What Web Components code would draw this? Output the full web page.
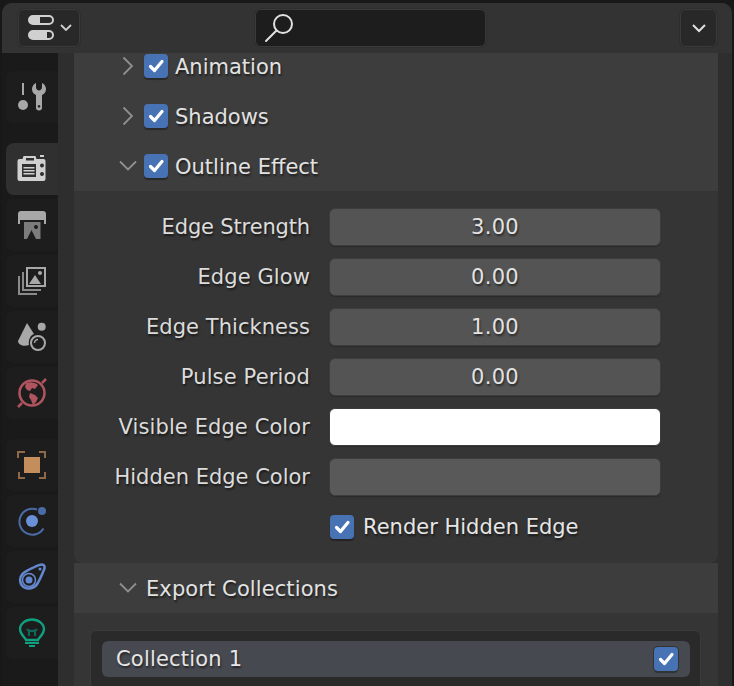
<!DOCTYPE html>
<html>
<head>
<meta charset="utf-8">
<style>
  html, body { margin: 0; height: 686px; overflow: hidden; background: #181818; }
  body { font-family: "DejaVu Sans", sans-serif; }
</style>
</head>
<body>
<prop-editor>
  <top-bar slot="top"></top-bar>
  <side-tabs slot="side">
    <side-tab class="last"><svg viewBox="0 0 28 28"><path fill="#a8a8a8" d="M4 0h2v12h-2z"/><circle cx="5" cy="22" r="5" fill="#a8a8a8"/><path fill="#a8a8a8" fill-rule="evenodd" d="M18 0v4c0 2 1.500 3.500 3 3.500s3-1.500 3-3.500v-4c2.500 1 4 3.500 4 6 0 3-1.500 5-4 6v13c0 1.500-1.300 2.500-3 2.500s-3-1-3-2.500v-13c-2.500-1-4-3-4-6 0-2.500 1.500-5 4-6zM21 22a1.300 1.300 0 1 0 .01 0z"/></svg></side-tab>
    <side-tab active><svg viewBox="0 0 28 28"><path fill="#d0d0d0" fill-rule="evenodd" d="M2 4h2.500l1-3h12l1 3h7a2 2 0 0 1 2 2v18a2 2 0 0 1-2 2h-24a2 2 0 0 1-2-2v-18a2 2 0 0 1 2-2zM8 3v2.500h8v-2.500zM4 9v13h14v-13zM24 8.500a2 2 0 1 0 .01 0zM24 17a2 2 0 1 0 .01 0z"/><path fill="#d0d0d0" d="M22 0h4v2h-4zM5.500 12h11v1.500h-11zM5.500 15h11v1.500h-11zM5.500 18h11v1.500h-11z"/></svg></side-tab>
    <side-tab><svg viewBox="0 0 28 28"><path fill="#a8a8a8" d="M3 0h22a3 3 0 0 1 3 3v10h-2v-4h-24v4h-2v-10a3 3 0 0 1 3-3z"/><path fill="#7c7c7c" d="M6 11h16.500v17h-16.500z"/><path fill="#1d1d1d" d="M9 28l4.500-9 4.500 9zM18 14a2 2 0 1 0 .01 0z"/></svg></side-tab>
    <side-tab><svg viewBox="0 0 28 28"><path fill="none" stroke="#a8a8a8" stroke-width="2" d="M9 1h18v18h-18z"/><path fill="#a8a8a8" d="M11 17l6-9 6 9zM22 4a2 2 0 1 0 .01 0z"/><path fill="none" stroke="#8a8a8a" stroke-width="2" d="M5 5v18h18M1 9v18h18"/></svg></side-tab>
    <side-tab><svg viewBox="0 0 28 28"><path fill="#a8a8a8" d="M9 0L0 18C0 22 6 24 11 22 10 16 13 12 16 11Z"/><circle cx="23.700" cy="3.700" r="4" fill="#a8a8a8"/><circle cx="20" cy="20" r="7" fill="none" stroke="#a8a8a8" stroke-width="2"/><path fill="none" stroke="#a8a8a8" stroke-width="1.500" d="M16.500 20a3.500 3.500 0 0 1 3.500-3.500"/></svg></side-tab>
    <side-tab class="last"><svg viewBox="0 0 28 28"><circle cx="14" cy="14" r="12.500" fill="none" stroke="#b0555f" stroke-width="2.500"/><path stroke="#b0555f" stroke-width="2.500" d="M28 0L24 4M0 28L4 24"/><path fill="#b0555f" d="M8 4c4-1.500 9-1 12 2l-3 4-3-1-2 3-3-1-2-3zM12 14l5 2 3 3-2 4-3 3-2-5-2-3z"/></svg></side-tab>
    <side-tab><svg viewBox="0 0 28 28"><path fill="none" stroke="#8f6a4a" stroke-width="2" d="M0 7v-6h7M21 1h6v6M27 21v6h-6M7 27h-6v-6"/><path fill="#c48d5c" d="M6 6h16v16h-16z"/></svg></side-tab>
    <side-tab><svg viewBox="0 0 28 28"><path fill="none" stroke="#4a6ba5" stroke-width="2" d="M19 2.500a13 13 0 1 0 6.500 19"/><circle cx="14" cy="14" r="6" fill="#6a90d8"/><circle cx="24" cy="4" r="4" fill="#4a6ba5"/></svg></side-tab>
    <side-tab><svg viewBox="0 0 28 28"><path fill="none" stroke="#6488cf" stroke-width="2.500" d="M24 1.500c2 0 3 2 2.500 4-2 5-4 10-7 15-3 5-10 6.500-14 3.500-4-3-4.500-9-1-13 3-3 8-5 12-7 3-1.500 5-2.500 7.500-2.500z"/><circle cx="11" cy="17" r="3.500" fill="#6488cf"/><circle cx="11" cy="17" r="6.500" fill="none" stroke="#6488cf" stroke-width="1.500"/><circle cx="22" cy="6" r="1.500" fill="#6488cf"/></svg></side-tab>
    <side-tab><svg viewBox="0 0 28 28"><path fill="none" stroke="#10a080" stroke-width="2.300" d="M8 21c-1-3-6-5-6-11a12 9.500 0 0 1 24 0c0 6-5 8-6 11z"/><path fill="none" stroke="#0e6a58" stroke-width="2" d="M9 10c1 2 3 2 5 2s4 0 5-2M11 12v5M17 12v5"/><path fill="#10a080" d="M7 23h14v2h-14zM11 26h6v2h-6z"/></svg></side-tab>
  </side-tabs>
  <panel-head slot="main" open="false" check="true">Animation</panel-head>
  <panel-head slot="main" open="false" check="true">Shadows</panel-head>
  <panel-head slot="main" open="true" check="true">Outline Effect</panel-head>
  <panel-body slot="main">
    <prop-row label="Edge Strength" style="letter-spacing:-.15px"><num-field>3.00</num-field></prop-row>
    <prop-row label="Edge Glow" style="letter-spacing:.1px"><num-field>0.00</num-field></prop-row>
    <prop-row label="Edge Thickness" style="letter-spacing:.05px"><num-field>1.00</num-field></prop-row>
    <prop-row label="Pulse Period" style="letter-spacing:.15px"><num-field>0.00</num-field></prop-row>
    <prop-row label="Visible Edge Color" style="letter-spacing:.1px"><color-field color="#ffffff"></color-field></prop-row>
    <prop-row label="Hidden Edge Color"><color-field color="#595959"></color-field></prop-row>
    <prop-row><check-label>Render Hidden Edge</check-label></prop-row>
  </panel-body>
  <panel-head slot="main" open="true" style="letter-spacing:.1px">Export Collections</panel-head>
  <list-box slot="main"><list-item>Collection 1</list-item></list-box>
</prop-editor>

<script>
const CHECK_SVG = `<svg viewBox="0 0 24 24" width="24" height="24"><path fill="none" stroke="#fff" stroke-width="3.200" stroke-linecap="round" stroke-linejoin="round" d="M6.500 12.500l4 4 7.500-9"/></svg>`;
const CHEVRON_OPEN = `<svg viewBox="0 0 20 12" width="20" height="12"><path fill="none" stroke="#8f8f8f" stroke-width="1.800" d="M2 1.500l8 8 8-8"/></svg>`;
const CHEVRON_CLOSED = `<svg viewBox="0 0 12 20" width="12" height="20"><path fill="none" stroke="#8f8f8f" stroke-width="1.800" d="M1.500 1.500l8.500 8.500-8.500 8.500"/></svg>`;

class Base extends HTMLElement {
  constructor() {
    super();
    this.attachShadow({ mode: "open" });
  }
  connectedCallback() {
    this.shadowRoot.innerHTML = this.render();
  }
}

class PropEditor extends Base {
  render() {
    return /* html */`
    <style>
      :host { display: block; padding: 3px 2px 0; height: 683px; }
      .win { height: 100%; display: grid; grid-template-columns: 56px 1fr; grid-template-rows: 50px 1fr;
        background: #2e2e2e; border-radius: 10px 10px 0 0; overflow: hidden; }
      .top { grid-column: 1 / 3; }
      .side { background: #1a1a1a; overflow: hidden; }
      .scroll { display: flex; padding: 0 14px 0 16px; overflow: hidden; }
      /* the panel column is scrolled down a little, the first header is cut off */
      .main { flex: 1; display: block; min-width: 0; margin-top: -12px; }
    </style>
    <div class="win">
      <div class="top"><slot name="top"></slot></div>
      <div class="side"><slot name="side"></slot></div>
      <div class="scroll"><div class="main"><slot name="main"></slot></div></div>
    </div>`;
  }
}

class TopBar extends Base {
  render() {
    return /* html */`
    <style>
      :host { display: flex; height: 50px; background: #333; align-items: center; box-sizing: border-box; padding: 0 15px 0 16px; }
      .btn { box-sizing: border-box; height: 38px; background: #282828; border: 1px solid #3a3a3a; border-radius: 6px;
        display: flex; align-items: center; justify-content: center; box-shadow: 0 0 0 1px #2e2e2e; }
      .toggle { width: 62px; gap: 5px; margin-right: 175px; }
      .search { width: 231px; background: #1d1d1d; justify-content: flex-start; padding-left: 8px; margin-right: 194px; }
      .more { width: 37px; }
      svg { display: block; }
    </style>
    <div class="btn toggle">
      <svg width="28" height="28" viewBox="0 0 28 28"><path fill="#d0d0d0" fill-rule="evenodd" d="M6 1h16a5 5 0 0 1 0 10h-16a5 5 0 0 1 0-10zM13 3v6h9a3 3 0 0 0 0-6z"/><path fill="#d0d0d0" fill-rule="evenodd" d="M6 16h16a5 5 0 0 1 0 10h-16a5 5 0 0 1 0-10zM20 18v6h2a3 3 0 0 0 0-6z"/></svg>
      <svg width="12" height="8" viewBox="0 0 12 8"><path fill="none" stroke="#d0d0d0" stroke-width="1.800" d="M1 1l5 5 5-5"/></svg>
    </div>
    <div class="btn search">
      <svg width="30" height="30" viewBox="0 0 30 30"><circle cx="19" cy="11" r="9" fill="none" stroke="#e0e0e0" stroke-width="2"/><path stroke="#e0e0e0" stroke-width="2" stroke-linecap="round" d="M12.500 17.500L2 28"/></svg>
    </div>
    <div class="btn more">
      <svg width="14" height="9" viewBox="0 0 14 9"><path fill="none" stroke="#e0e0e0" stroke-width="2" d="M1 1l6 6 6-6"/></svg>
    </div>`;
  }
}

class SideTabs extends Base {
  render() {
    return /* html */`
    <style>
      :host { display: flex; flex-direction: column; gap: 4px; padding-top: 18px; }
    </style>
    <slot></slot>`;
  }
}

class SideTab extends Base {
  render() {
    return /* html */`
    <style>
      :host { display: flex; flex: none; box-sizing: border-box; height: 52px; margin-left: 4px; padding-left: 12px; align-items: center;
        background: #1d1d1d; border-radius: 8px 0 0 8px; }
      :host(.last) { margin-bottom: 16px; }
      :host([active]) { background: #303030; }
      ::slotted(svg) { width: 28px; height: 28px; display: block; overflow: visible; }
    </style>
    <slot></slot>`;
  }
}

class PanelHead extends Base {
  render() {
    const open = this.getAttribute("open") === "true";
    const hasCheck = this.hasAttribute("check");
    const chevron = `<span class="chev">${open ? CHEVRON_OPEN : CHEVRON_CLOSED}</span>`;
    return /* html */`
    <style>
      :host { display: flex; align-items: center; height: 50px; background: #3d3d3d; box-sizing: border-box;
        padding-left: 42px; font: 21px "DejaVu Sans", sans-serif; color: #e2e2e2; text-shadow: 1px 2px 2px #0008; }
      .chev { width: 24px; height: 26px; display: flex; justify-content: center; align-items: center; margin-right: 4px; }
      .text { padding-top: 1px; }
      svg { display: block; }
      check-mark { margin: 0 7px 0 0; }
    </style>
    ${chevron}${hasCheck ? `<check-mark></check-mark>` : `<span style="width:2px"></span>`}
    <span class="text"><slot></slot></span>`;
  }
}

class CheckMark extends Base {
  render() {
    return /* html */`
    <style>
      :host { display: block; flex: none; width: 24px; height: 24px; background: #4772b3; border-radius: 4px; box-shadow: 0 2px 1px #0005; }
      :host(.boxed) { box-shadow: 0 0 0 1px #333, 0 2px 1px #0005; }
      svg { display: block; }
    </style>
    ${CHECK_SVG}`;
  }
}

class PanelBody extends Base {
  render() {
    return /* html */`
    <style>
      :host { display: flex; flex-direction: column; gap: 12px; background: #353535; padding: 17px 0; border-radius: 0 0 8px 8px; }
    </style>
    <slot></slot>`;
  }
}

class PropRow extends Base {
  render() {
    const label = this.getAttribute("label") || "";
    return /* html */`
    <style>
      :host { display: grid; grid-template-columns: 236px 332px; column-gap: 19px; height: 38px; align-items: center;
        font: 21px "DejaVu Sans", sans-serif; color: #dcdcdc; text-shadow: 1px 2px 2px #0008; }
      .label { text-align: right; white-space: nowrap; }
    </style>
    <div class="label">${label}</div>
    <slot></slot>`;
  }
}

class NumField extends Base {
  render() {
    return /* html */`
    <style>
      :host { display: flex; box-sizing: border-box; height: 38px; align-items: center; justify-content: center;
        background: #545454; border: 1px solid #3d3d3d; border-radius: 6px; box-shadow: 0 1px 1px #2a2a2a;
        font: 21px "DejaVu Sans", sans-serif; letter-spacing: .3px; color: #e2e2e2; text-shadow: 1px 2px 2px #0008; }
    </style>
    <slot></slot>`;
  }
}

class ColorField extends Base {
  render() {
    const c = this.getAttribute("color");
    return /* html */`
    <style>
      :host { display: block; box-sizing: border-box; height: 38px; background: ${c}; border: 1px solid #3d3d3d; border-radius: 6px; box-shadow: 0 1px 1px #2a2a2a; }
    </style>`;
  }
}

class CheckLabel extends Base {
  render() {
    return /* html */`
    <style>
      :host { display: flex; align-items: center; gap: 9px; padding-left: 1px; font: 21px "DejaVu Sans", sans-serif; color: #e6e6e6; }
    </style>
    <check-mark></check-mark><span><slot></slot></span>`;
  }
}

class ListBox extends Base {
  render() {
    return /* html */`
    <style>
      :host { display: block; background: #353535; padding: 17px 17px 0 16px; height: 100px; }
      .box { background: #2a2a2a; border: 1px solid #3a3a3a; border-radius: 6px; padding: 10px 10px 10px 11px; height: 100%; box-sizing: border-box; }
    </style>
    <div class="box"><slot></slot></div>`;
  }
}

class ListItem extends Base {
  render() {
    return /* html */`
    <style>
      :host { display: flex; align-items: center; justify-content: space-between; height: 36px; background: #474950; border-radius: 6px;
        padding: 0 12px 0 14px; font: 21px "DejaVu Sans", sans-serif; letter-spacing: .2px; color: #e6e6e6; text-shadow: 1px 2px 2px #0008; }
    </style>
    <span><slot></slot></span><check-mark class="boxed"></check-mark>`;
  }
}

customElements.define("prop-editor", PropEditor);
customElements.define("top-bar", TopBar);
customElements.define("side-tabs", SideTabs);
customElements.define("side-tab", SideTab);
customElements.define("check-mark", CheckMark);
customElements.define("panel-head", PanelHead);
customElements.define("panel-body", PanelBody);
customElements.define("prop-row", PropRow);
customElements.define("num-field", NumField);
customElements.define("color-field", ColorField);
customElements.define("check-label", CheckLabel);
customElements.define("list-box", ListBox);
customElements.define("list-item", ListItem);
</script>
</body>
</html>
